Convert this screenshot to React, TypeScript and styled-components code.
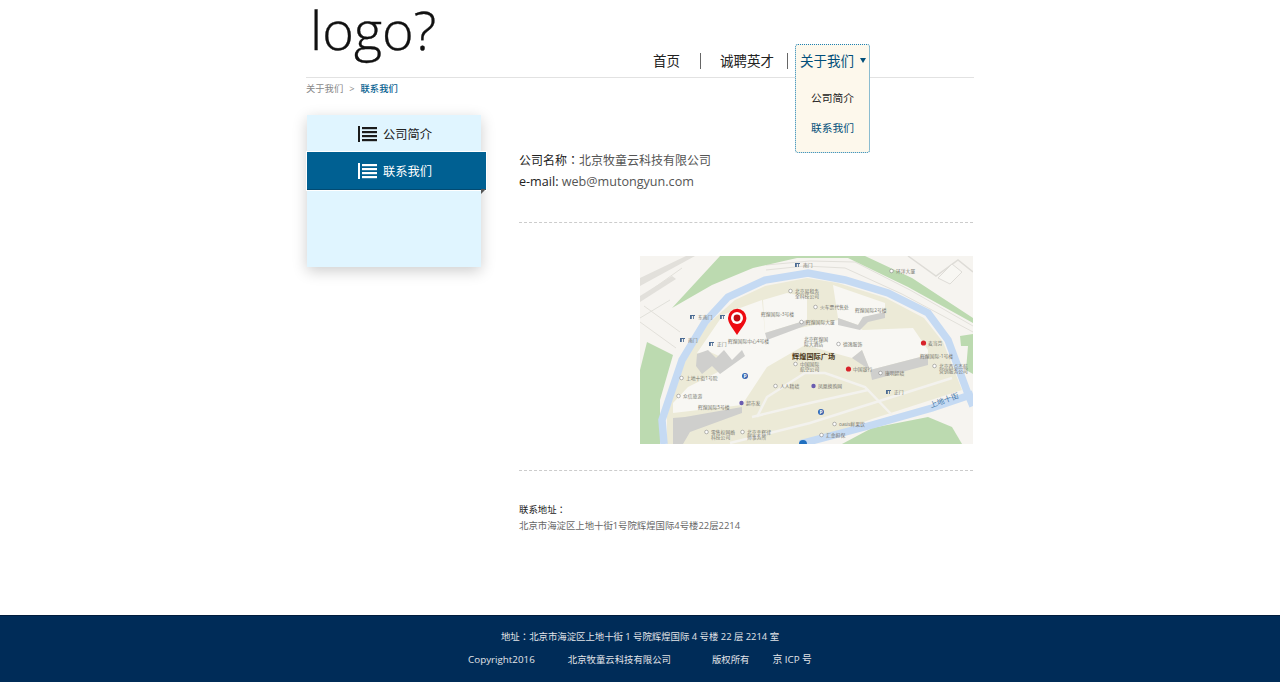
import React from "react";
import styled, { createGlobalStyle } from "styled-components";

const FONT = `"Open Sans", "Noto Sans CJK SC", sans-serif`;

const GlobalStyle = createGlobalStyle`
  html, body { margin: 0; padding: 0; background: #fff; }
  body { font-family: ${FONT}; overflow: hidden; }
`;

/** map labels: x, y, text, with a small dot or door marker */
type MapLabel = { x: number; y: number; t: string; mark?: "dot" | "door" | "red" | "purple" };

const LABELS: MapLabel[] = [
  { x: 163, y: 11, t: "南门", mark: "door" },
  { x: 256, y: 17, t: "环洋大厦", mark: "dot" },
  { x: 155, y: 37, t: "北京易租务", mark: "dot" },
  { x: 155, y: 42, t: "全科技公司" },
  { x: 180, y: 53, t: "火车票代售处", mark: "dot" },
  { x: 121, y: 60, t: "辉煌国际-3号楼" },
  { x: 215, y: 56, t: "辉煌国际2号楼" },
  { x: 166, y: 68, t: "辉煌国际大厦", mark: "dot" },
  { x: 58, y: 63, t: "东南门", mark: "door" },
  { x: 88, y: 63, t: "", mark: "door" },
  { x: 48, y: 86, t: "南门", mark: "door" },
  { x: 77, y: 90, t: "正门", mark: "door" },
  { x: 88, y: 87, t: "辉煌国际中心4号楼" },
  { x: 164, y: 85, t: "北京辉煌国" },
  { x: 164, y: 90, t: "际大酒店" },
  { x: 203, y: 90, t: "德逸服饰", mark: "dot" },
  { x: 288, y: 89, t: "麦当劳", mark: "red" },
  { x: 160, y: 110, t: "中国国际", mark: "dot" },
  { x: 160, y: 115, t: "航空公司" },
  { x: 213, y: 115, t: "中国银行", mark: "red" },
  { x: 280, y: 102, t: "辉煌国际-1号楼" },
  { x: 245, y: 119, t: "康明超绩", mark: "dot" },
  { x: 299, y: 112, t: "北京西点杰航", mark: "dot" },
  { x: 299, y: 117, t: "营销服务公司" },
  { x: 46, y: 124, t: "上地十街1号院", mark: "dot" },
  { x: 43, y: 142, t: "众信旅游", mark: "dot" },
  { x: 140, y: 132, t: "人人精绩", mark: "dot" },
  { x: 178, y: 132, t: "凤凰换购网", mark: "purple" },
  { x: 254, y: 138, t: "正门", mark: "door" },
  { x: 58, y: 153, t: "辉煌国际5号楼" },
  { x: 106, y: 149, t: "超市发", mark: "purple" },
  { x: 71, y: 178, t: "零售权网络", mark: "dot" },
  { x: 71, y: 183, t: "科技公司" },
  { x: 107, y: 178, t: "北京幸辉律", mark: "dot" },
  { x: 107, y: 183, t: "师事务所" },
  { x: 199, y: 170, t: "oasis鲜果饮", mark: "dot" },
  { x: 186, y: 181, t: "汇金担保", mark: "dot" },
];

const MapDrawing = () => (
  <svg width="333" height="188" viewBox="0 0 333 188" style={{ display: "block" }}>
    <rect width="333" height="188" fill="#f6f4f0" />
    {/* roads outside of the canal */}
    <g fill="none" stroke="#e2e0da" strokeWidth="1">
      <path d="M0 42 L42 12 M0 62 L30 44 M4 50 L40 76 M0 66 L36 92 M126 14 L165 10 L205 12 L262 38 L333 76 M126 9 L170 5 L215 6 L270 34 L333 70" />
    </g>
    <path d="M0 22 L46 0 L55 0 L0 30Z" fill="#e2e0db" />
    <path d="M0 40 L32 20 L36 23 L0 46Z" fill="#e2e0db" />
    <path d="M268 0 L296 20 L318 4 L333 16" fill="none" stroke="#dedcd7" strokeWidth="1.5" />
    <path d="M298 22 L312 8 L322 16 L310 28Z" fill="#f8f7f3" stroke="#dedcd7" />
    {/* green */}
    <path d="M32 52 L80 0 L225 0 L272 22 L333 62 L333 67 L268 31 L208 2 L157 2 L113 12 L72 29Z" fill="#bcdab0" />
    <path d="M0 114 L7 86 L33 99 L20 144 L20 188 L0 188Z" fill="#bcdab0" />
    <path d="M202 188 L232 172 L288 161 L312 171 L322 188Z" fill="#bcdab0" />
    <path d="M320 80 L333 78 L333 118 L326 114 L328 90 L321 90Z" fill="#bcdab0" />
    {/* block within the canal */}
    <path d="M27 188 L27 160 L45 105 L68 68 L95 44 L125 30 L167 22 L198 27 L246 42 L284 62 L303 86 L322 134 L232 163 L165 188Z" fill="#ecead7" />
    {/* canal */}
    <path d="M24 188 L22 164 L42 104 L65 66 L88 41 L125 24 L168 17 L205 24 L248 37 L288 57 L308 84 L328 138" fill="none" stroke="#c5daf3" strokeWidth="7.5" />
    <path d="M333 138 L292 152 L232 169 L160 188" fill="none" stroke="#c5daf3" strokeWidth="7.5" />
    <path d="M328 138 L333 150" fill="none" stroke="#c5daf3" strokeWidth="7.5" />
    {/* buildings */}
    <path d="M57 97 L83 59 L100 52 L122 44 L125 77 L165 71 L198 64 L223 74 L273 72 L288 94 L288 99 L230 114 L222 94 L212 102 L165 89 L127 111 L102 149 L33 157 L33 147 L48 131 L78 116 L90 105 L70 96Z" fill="#f8f7f3" />
    <path d="M123 44 L147 37 L167 41 L167 64 L125 77Z" fill="#f8f7f3" />
    <path d="M193 29 L245 47 L245 57 L223 61 L218 69 L198 62Z" fill="#f8f7f3" />
    <path d="M57 98 L68 94 L76 102 L84 94 L92 104 L102 94 L105 100 L80 118 L72 110 L62 118 L56 110Z" fill="#cfcfcd" />
    <path d="M125 77 L167 64 L167 69 L127 84Z" fill="#cfcfcd" />
    <path d="M198 62 L218 69 L223 61 L245 56 L245 62 L228 66 L220 74 L198 69Z" fill="#cfcfcd" />
    <path d="M212 102 L222 94 L230 114 L288 99 L288 109 L232 124 L230 114Z" fill="#cfcfcd" />
    <path d="M45 161 L102 151 L102 157 L50 176 L43 188 L33 188 L33 162Z" fill="#cfcfcd" />
    {/* inner streets */}
    <g fill="none" stroke="#f3f2ee" strokeWidth="2.5">
      <path d="M117 161 L127 141 L165 117 L185 117 L225 131 L252 159" />
      <path d="M112 161 L170 147 L228 134" />
      <path d="M90 187 L170 167 L312 122" />
    </g>
    {/* labels */}
    <g fontFamily={FONT} fontSize="4.8" fill="#77776f">
      {LABELS.map((l, i) => (
        <g key={i}>
          {l.mark === "dot" && <circle cx={l.x - 4.5} cy={l.y - 2} r="1.8" fill="#fff" stroke="#888" strokeWidth="0.6" />}
          {l.mark === "door" && <path d={`M${l.x - 8} ${l.y - 4}h5v1h-1v3h-.8v-3h-1.4v3h-1.8z`} fill="#4a6a92" />}
          {l.mark === "red" && <circle cx={l.x - 4.5} cy={l.y - 2} r="2.6" fill="#d8232a" />}
          {l.mark === "purple" && <circle cx={l.x - 4.5} cy={l.y - 2} r="2.2" fill="#6a5cb0" />}
          <text x={l.x} y={l.y}>{l.t}</text>
        </g>
      ))}
      <text x="152" y="103" fontSize="7.2" fontWeight="700" fill="#4d3a1c">辉煌国际广场</text>
      <text x="0" y="0" fontSize="7.5" fill="#4477a8" transform="translate(291 152) rotate(-20)">上地十街</text>
    </g>
    {/* parking markers */}
    <g fontFamily={FONT} fontSize="5" fontWeight="700" fill="#fff">
      <circle cx="105" cy="120" r="3" fill="#3565b0" />
      <text x="103.4" y="122">P</text>
      <circle cx="181" cy="156" r="3" fill="#3565b0" />
      <text x="179.4" y="158">P</text>
      <circle cx="163" cy="188" r="4" fill="#1f6fc0" />
    </g>
    {/* pin */}
    <path d="M97 79 C92 71 88 67 88 62 A9.2 9.2 0 0 1 106.4 62 C106.4 67 102 71 97 79Z" fill="#ee0b12" />
    <circle cx="97" cy="62" r="6" fill="#fff" />
    <circle cx="97" cy="62" r="3.4" fill="#c00d12" />
  </svg>
);

const ListIcon = ({ color }: { color: string }) => (
  <svg width="19" height="16" viewBox="0 0 19 16">
    <rect x="0" y="0" width="2" height="16" fill={color} />
    <rect x="4" y="1" width="15" height="2.2" fill={color} />
    <rect x="4" y="5" width="15" height="2.2" fill={color} />
    <rect x="4" y="9" width="15" height="2.2" fill={color} />
    <rect x="4" y="13" width="15" height="2.2" fill={color} />
  </svg>
);

const App = () => (
  <Page>
    <GlobalStyle />
    <Wrapper>
      <Header>
        <Logo>logo?</Logo>
        <Nav>
          <NavLink>首页</NavLink>
          <NavDivider />
          <NavLink $wide>诚聘英才</NavLink>
          <NavDivider />
          <ActiveNav>
            关于我们
            <Caret />
            <DropDown>
              <DropItem>公司简介</DropItem>
              <DropItem $active>联系我们</DropItem>
            </DropDown>
          </ActiveNav>
        </Nav>
      </Header>
      <Crumbs>
        关于我们<CrumbSep>&gt;</CrumbSep>
        <CrumbNow>联系我们</CrumbNow>
      </Crumbs>
      <Main>
        <Sidebar>
          <SideItem>
            <ListIcon color="#1b1b1b" />
            公司简介
          </SideItem>
          <SideItem $active>
            <ListIcon color="#ffffff" />
            联系我们
          </SideItem>
        </Sidebar>
        <Content>
          <InfoBlock>
            <InfoLine>
              <b>公司名称<Colon>：</Colon></b>北京牧童云科技有限公司
            </InfoLine>
            <InfoLine $latin>
              <b>e-mail:</b> web@mutongyun.com
            </InfoLine>
          </InfoBlock>
          <MapBlock>
            <MapDrawing />
          </MapBlock>
          <Address>
            <AddressTitle>联系地址<Colon>：</Colon></AddressTitle>
            <AddressText>北京市海淀区上地十街1号院辉煌国际4号楼22层2214</AddressText>
          </Address>
        </Content>
      </Main>
    </Wrapper>
    <Footer>
      <FooterRow>地址<Colon>：</Colon>北京市海淀区上地十街 1 号院辉煌国际 4 号楼 22 层 2214 室</FooterRow>
      <FooterRow>
        <FooterCell $gap={33} $latin>Copyright2016</FooterCell>
        <FooterCell $gap={41}>北京牧童云科技有限公司</FooterCell>
        <FooterCell $gap={23}>版权所有</FooterCell>
        <FooterCell $gap={0} $latin>京 ICP 号</FooterCell>
      </FooterRow>
    </Footer>
  </Page>
);

const Page = styled.div`
  min-height: 100vh;
  display: flex;
  flex-direction: column;
`;

const Wrapper = styled.div`
  width: 668px;
  margin: 0 auto;
`;

const Colon = styled.span`
  font-family: "Noto Sans CJK TC", sans-serif;
`;

const Header = styled.header`
  height: 77px;
  border-bottom: 1px solid #e2e2e2;
  display: flex;
  justify-content: space-between;
  align-items: flex-end;
`;

const Logo = styled.div`
  align-self: flex-start;
  margin-left: 4px;
  font-family: "Open Sans", sans-serif;
  font-weight: 300;
  font-size: 54px;
  line-height: 58px;
  color: #111;
  -webkit-text-stroke: 0.35px #111;
`;

const Nav = styled.nav`
  display: flex;
  align-items: center;
  height: 33px;
  padding-right: 104px;
  font-size: 13.5px;
  color: #222;
`;

const NavLink = styled.span<{ $wide?: boolean }>`
  padding-top: 2px;
  line-height: 31px;
  margin: ${(p) => (p.$wide ? "0 13px 0 19px" : "0 20px 0 0")};
`;

const NavDivider = styled.i`
  display: block;
  width: 1px;
  height: 16px;
  background: #666;
`;

const ActiveNav = styled.span`
  position: relative;
  z-index: 5;
  width: 75px;
  margin-left: 7px;
  padding: 2px 0 0 5px;
  box-sizing: border-box;
  line-height: 31px;
  color: #024f7a;
`;

const Caret = styled.i`
  position: absolute;
  z-index: 2;
  top: 14px;
  right: 4px;
  border-top: 5px solid #024f7a;
  border-left: 3px solid transparent;
  border-right: 3px solid transparent;
`;

const DropDown = styled.div`
  position: absolute;
  z-index: -1;
  left: 0;
  top: 0;
  width: 75px;
  height: 109px;
  box-sizing: border-box;
  padding-top: 38px;
  border: 1px dotted #1a80b4;
  border-radius: 3px;
  background: #fdf8ec;
`;

const DropItem = styled.div<{ $active?: boolean }>`
  height: 30px;
  line-height: 30px;
  text-align: center;
  font-size: 10.75px;
  color: ${(p) => (p.$active ? "#024f7a" : "#222")};
`;

const Crumbs = styled.div`
  height: 20px;
  line-height: 21px;
  font-size: 9.3px;
  color: #888;
`;

const CrumbSep = styled.span`
  margin: 0 6px;
`;

const CrumbNow = styled.span`
  font-weight: 500;
  color: #04608f;
`;

const Main = styled.main`
  display: flex;
  align-items: flex-start;
  padding-top: 17px;
  padding-left: 1px;
`;

const Sidebar = styled.aside`
  width: 174px;
  height: 152px;
  background: #e0f5ff;
  box-shadow: 0 4px 14px rgba(0, 0, 0, 0.2);
  font-size: 12.25px;
`;

const SideItem = styled.div<{ $active?: boolean }>`
  position: relative;
  display: flex;
  justify-content: center;
  align-items: center;
  gap: 6px;
  box-sizing: border-box;
  height: ${(p) => (p.$active ? 38 : 37)}px;
  color: ${(p) => (p.$active ? "#fff" : "#222")};
  background: ${(p) => (p.$active ? "#006092" : "transparent")};
  width: ${(p) => (p.$active ? 179 : 174)}px;
  padding-left: 2px;
  padding-right: ${(p) => (p.$active ? 5 : 0)}px;
  border-bottom: ${(p) => (p.$active ? "1px solid #024a72" : "none")};
  box-shadow: ${(p) => (p.$active ? "0 0 0 1px #fff" : "none")};

  ${(p) =>
    p.$active &&
    `&::after {
      content: "";
      position: absolute;
      right: 0;
      bottom: -5px;
      border-top: 5px solid #555;
      border-right: 5px solid transparent;
    }`}
`;

const Content = styled.section`
  width: 454px;
  margin-left: 38px;
`;

const InfoBlock = styled.div`
  padding-top: 34px;
  height: 73px;
  border-bottom: 1px dashed #ccc;
`;

const InfoLine = styled.div<{ $latin?: boolean }>`
  font-size: ${(p) => (p.$latin ? 12.6 : 12)}px;
  line-height: 21px;
  color: #555;

  b {
    font-weight: 400;
    color: #222;
  }
`;

const MapBlock = styled.div`
  display: flex;
  justify-content: flex-end;
  padding: 33px 0 26px;
  border-bottom: 1px dashed #ccc;
`;

const Address = styled.div`
  padding-top: 30px;
  font-size: 9.4px;
`;

const AddressTitle = styled.div`
  line-height: 16px;
  color: #222;
`;

const AddressText = styled.div`
  line-height: 16px;
  color: #666;
`;

const Footer = styled.footer`
  margin-top: auto;
  height: 67px;
  box-sizing: border-box;
  padding-top: 10px;
  background: #002c58;
  border-top: 1px solid #001c3c;
  color: #e2e4e8;
  font-size: 9.4px;
`;

const FooterRow = styled.div`
  display: flex;
  justify-content: center;
  height: 23px;
  line-height: 21px;
`;

const FooterCell = styled.span<{ $gap: number; $latin?: boolean }>`
  margin-right: ${(p) => p.$gap}px;
  font-size: ${(p) => (p.$latin ? 9.8 : 9.4)}px;
`;

export default App;
